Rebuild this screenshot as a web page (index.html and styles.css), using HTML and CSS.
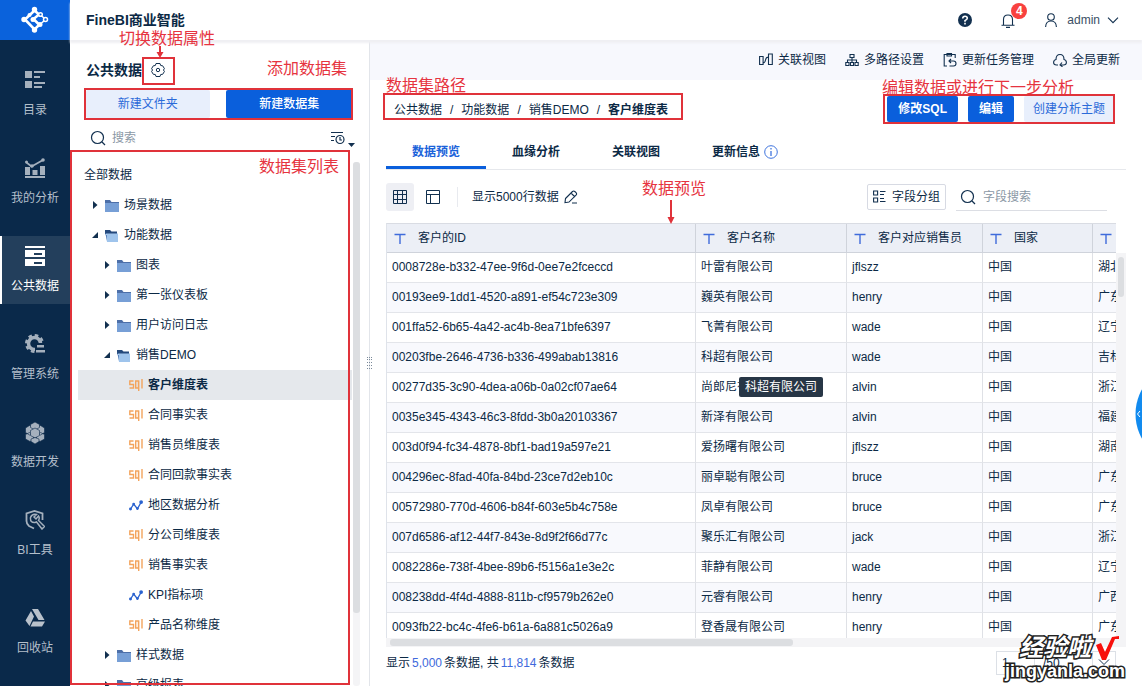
FILE: index.html
```html
<!DOCTYPE html>
<html lang="zh-CN">
<head>
<meta charset="utf-8">
<title>FineBI商业智能</title>
<link rel="stylesheet" href="styles.css">
</head>
<body>
<svg class="sprite" aria-hidden="true">
  <symbol id="folder" viewBox="0 0 14 13"><path d="M0 1h5l1.500 2H14v10H0z" fill="#4d6fa8"/><path d="M0 4h14v9H0z" fill="#779fd6"/></symbol>
  <symbol id="folder-open" viewBox="0 0 14 13"><path d="M0 1h5l1.500 1.500H12V5H0z" fill="#24497c"/><path d="M1 4.500h12V13H2z" fill="#9fc4ec"/><path d="M0 3v3h2v6z" fill="#5b83bb"/></symbol>
  <symbol id="sql" viewBox="0 0 14 13"><path d="M4.500 2H.800v3.500h3.700V9H.500M9.500 2H6.700v7h2.800zM9.700 1.500V12M13 0v9.500" fill="none" stroke="#f3a45c" stroke-width="1.400"/></symbol>
  <symbol id="trend" viewBox="0 0 15 12"><path d="M1.500 10 5 4.500l4 5L13 2.500" fill="none" stroke="#2a62cf" stroke-width="1.400"/><g fill="#2a62cf"><circle cx="1.600" cy="9.800" r="1.600"/><circle cx="5" cy="4.500" r="1.500"/><circle cx="9" cy="9.300" r="1.500"/><circle cx="13" cy="2.300" r="2"/></g></symbol>
  <symbol id="shut" viewBox="0 0 6 8"><path d="M1 0v8l4.500-4z" fill="#12304f"/></symbol>
  <symbol id="open" viewBox="0 0 6 8"><path d="M6 1v6H0z" fill="#12304f"/></symbol>
  <symbol id="search" viewBox="0 0 16 16"><circle cx="7.500" cy="7.500" r="6" fill="none" stroke="#12304f" stroke-width="1.200"/><path d="m12 12 3 3" stroke="#12304f" stroke-width="1.300"/></symbol>
  <symbol id="type" viewBox="0 0 12 12"><path d="M.500 1.500h11M6 1.500V11" stroke="#3f6bdb" stroke-width="1.400" fill="none"/></symbol>
</svg>

<div class="app">
  <nav class="nav">
    <a class="logo" href="#" aria-label="FineBI">
      <svg width="30" height="30" viewBox="0 0 30 30" fill="none" stroke="#fff" stroke-width="2.600"><path d="M14.500 5.500 5 14.500l9.500 10 5-5M14.500 5.500l4.500 4-5.500 4.500 5 5"/><path d="M20 9.500l4 3.500M21 18.500l3.500-3" stroke-width="1.600"/><g fill="#fff" stroke="none"><circle cx="14.500" cy="4.500" r="2.700"/><circle cx="4" cy="14.500" r="2.700"/><circle cx="14.500" cy="25" r="2.700"/><circle cx="20" cy="19.500" r="2.500"/><circle cx="13" cy="14.500" r="2.500"/><circle cx="9.500" cy="10" r="2"/></g><circle cx="20.500" cy="9.500" r="1.800" fill="#0a62dc" stroke-width="1.500"/><circle cx="25.500" cy="14.500" r="2" fill="#0a62dc" stroke-width="1.500"/></svg>
    </a>
    <div class="nav-list">
      <a class="nav-item" href="#"><svg width="20" height="20" viewBox="0 0 20 20" fill="#a5b0bd"><path d="M0 1h7v7H0zM9 1h11v2H9zM9 6h6v2H9zM0 11h7v7H0zM9 12h11v2H9zM9 16h8v2H9z"/></svg><span>目录</span></a>
      <a class="nav-item" href="#"><svg width="20" height="20" viewBox="0 0 20 20" fill="#a5b0bd"><path d="M0 9h5v8H0zM7.500 12h5v5h-5zM15 8h5v9h-5zM0 18h20v2H0z"/><path d="m1.500 4.500 5 4L11 6l7-4" fill="none" stroke="#a5b0bd" stroke-width="1.800"/><circle cx="1.500" cy="4" r="1.500"/><circle cx="7" cy="8" r="1.800"/><circle cx="18" cy="2" r="1.800"/></svg><span>我的分析</span></a>
      <a class="nav-item active" href="#"><svg width="20" height="20" viewBox="0 0 20 20"><path d="M0 0h20v2H0zM0 4h20v7H0zM0 13h20v7H0z" fill="#fff"/><path d="M9 7h8v2H9zM9 16h8v2H9z" fill="#233f5c"/></svg><span>公共数据</span></a>
      <a class="nav-item" href="#"><svg width="20" height="20" viewBox="0 0 20 20"><circle cx="9.500" cy="9.500" r="6" fill="none" stroke="#a5b0bd" stroke-width="3.500"/><circle cx="9.500" cy="9.500" r="8.300" fill="none" stroke="#a5b0bd" stroke-width="2.400" stroke-dasharray="3.600 2.920"/><path d="M10 9h10v11H10z" fill="#0a294a"/><path d="M12 11h7v2.500h-7zM11 16h9v2.500h-9z" fill="#a5b0bd"/></svg><span>管理系统</span></a>
      <a class="nav-item" href="#"><svg width="20" height="22" viewBox="0 0 20 22" fill="#a5b0bd" stroke="#0a294a" stroke-width=".6"><path d="m4.500 3.500 4 2.500v4.500l-4 2.500-4-2.500V6zM15.500 3.500l4 2.500v4.500l-4 2.500-4-2.500V6zM4.500 10.500l4 2.500v4.500L5 19.500.500 17v-4.500zM15.500 10.500l4 2V17L15 19.500l-3.500-2V13z"/><path d="m10 0 4.500 2.500v3L10 8 5.500 5.500v-3z"/><path d="m10 6 4.500 2.500v5L10 16l-4.500-2.500v-5z"/><path d="m10 15.500 4 1.500v2.500L10 22l-4-2.500V17z"/></svg><span>数据开发</span></a>
      <a class="nav-item" href="#"><svg width="20" height="20" viewBox="0 0 20 20" fill="none" stroke="#a5b0bd" stroke-width="1.800"><path d="M9 18.500 4 16q-2.500-2-2.500-5V3.500L9.500 1l8 2.500V10"/><path d="m9 7 2.500-2.500Q7 3.500 5.500 7.500 5 13 10 12.500l1.500-.5 5.500 7 2.500-2.500-6-6q1.500-2.500 0-4.500L11 9z" stroke-width="1.500"/></svg><span>BI工具</span></a>
      <a class="nav-item last" href="#"><svg width="20" height="20" viewBox="0 0 20 20" fill="#b9c1cb"><path d="M7 1h6l6.500 11h-6zM6 3l3 5.500L4.500 18l-4-5.500zM8 13.500h12L17 18.500H5.500z"/></svg><span>回收站</span></a>
    </div>
  </nav>

  <div class="page">
    <header class="header">
      <h1 class="brand">FineBI商业智能</h1>
      <div class="user-bar">
        <button class="icon-btn" aria-label="帮助"><svg width="14" height="14" viewBox="0 0 14 14"><circle cx="7" cy="7" r="7" fill="#12304f"/><path d="M4.700 5.500Q4.800 3.200 7 3.200t2.300 2Q9.300 6.400 7 7.600v1.200M7 9.800v1.600" fill="none" stroke="#fff" stroke-width="1.600"/></svg></button>
        <button class="icon-btn bell" aria-label="消息"><svg width="14" height="15" viewBox="0 0 14 15" fill="none" stroke="#12304f" stroke-width="1.100"><path d="M2.500 12V6.500Q2.500 2 7 2t4.500 4.500V12M.500 12.300h13M5 14.400h4"/></svg><span class="badge">4</span></button>
        <button class="account"><svg class="person" width="12" height="14" viewBox="0 0 12 14" fill="none" stroke="#12304f" stroke-width="1.100"><circle cx="6" cy="4" r="3.300"/><path d="M.600 14Q.800 8 6 8t5.400 6"/></svg><span>admin</span><svg width="12" height="7" viewBox="0 0 12 7" fill="none" stroke="#12304f" stroke-width="1.100"><path d="m1 .700 5 5 5-5"/></svg></button>
      </div>
    </header>

    <div class="body">
      <aside class="panel">
        <div class="panel-title"><h2>公共数据</h2>
          <button class="icon-btn gear" aria-label="数据属性"><svg width="14" height="14" viewBox="0 0 14 14" fill="none" stroke="#12304f"><path d="M5 .500h4l.700 2 2 .300 1.800 3L12.300 7l1.200 1.300-1.800 3-2 .200-.7 2H5l-.700-2-2-.200-1.800-3L1.700 7 .500 5.800l1.800-3 2-.300z"/><circle cx="7" cy="7" r="1.700"/></svg></button>
        </div>
        <div class="panel-actions">
          <button class="btn soft">新建文件夹</button><button class="btn primary">新建数据集</button>
        </div>
        <div class="panel-search">
          <svg width="16" height="16"><use href="#search"/></svg>
          <input type="text" placeholder="搜索" aria-label="搜索">
          <button class="sort" aria-label="排序"><svg width="24" height="18" viewBox="0 0 24 18" fill="none" stroke="#12304f" stroke-width="1.200"><path d="M0 3.500h12M0 7.500h4M0 11.500h3"/><circle cx="9" cy="10.500" r="4"/><path d="M9 8v3h2"/><path d="M17 14h7l-3.500 4z" fill="#12304f" stroke="none"/></svg></button>
        </div>
        <div class="tree-area">
          <ul class="tree">
            <li class="l0">全部数据</li>
            <li class="l1"><svg class="arrow"><use href="#shut"/></svg><svg class="ico"><use href="#folder"/></svg>场景数据</li>
            <li class="l1"><svg class="arrow"><use href="#open"/></svg><svg class="ico"><use href="#folder-open"/></svg>功能数据</li>
            <li class="l2"><svg class="arrow"><use href="#shut"/></svg><svg class="ico"><use href="#folder"/></svg>图表</li>
            <li class="l2"><svg class="arrow"><use href="#shut"/></svg><svg class="ico"><use href="#folder"/></svg>第一张仪表板</li>
            <li class="l2"><svg class="arrow"><use href="#shut"/></svg><svg class="ico"><use href="#folder"/></svg>用户访问日志</li>
            <li class="l2"><svg class="arrow"><use href="#open"/></svg><svg class="ico"><use href="#folder-open"/></svg>销售DEMO</li>
            <li class="l3 selected"><svg class="ico"><use href="#sql"/></svg>客户维度表</li>
            <li class="l3"><svg class="ico"><use href="#sql"/></svg>合同事实表</li>
            <li class="l3"><svg class="ico"><use href="#sql"/></svg>销售员维度表</li>
            <li class="l3"><svg class="ico"><use href="#sql"/></svg>合同回款事实表</li>
            <li class="l3"><svg class="ico"><use href="#trend"/></svg>地区数据分析</li>
            <li class="l3"><svg class="ico"><use href="#sql"/></svg>分公司维度表</li>
            <li class="l3"><svg class="ico"><use href="#sql"/></svg>销售事实表</li>
            <li class="l3"><svg class="ico"><use href="#trend"/></svg>KPI指标项</li>
            <li class="l3"><svg class="ico"><use href="#sql"/></svg>产品名称维度</li>
            <li class="l2"><svg class="arrow"><use href="#shut"/></svg><svg class="ico"><use href="#folder"/></svg>样式数据</li>
            <li class="l2"><svg class="arrow"><use href="#shut"/></svg><svg class="ico"><use href="#folder"/></svg>高级报表</li>
          </ul>
          <div class="tree-track"><div class="tree-thumb"></div></div>
        </div>
        <svg class="grip" width="5" height="12" viewBox="0 0 5 12" fill="#7b8a9a"><path d="M0 0h1v1H0zM2 0h1v1H2zM4 0h1v1H4zM0 2h1v1H0zM2 2h1v1H2zM4 2h1v1H4zM0 5h1v1H0zM2 5h1v1H2zM4 5h1v1H4zM0 8h1v1H0zM2 8h1v1H2zM4 8h1v1H4zM0 11h1v1H0zM2 11h1v1H2zM4 11h1v1H4z"/></svg>
      </aside>

      <main class="main">
        <div class="tools">
          <button><svg width="14" height="14" viewBox="0 0 14 14" fill="none" stroke="#12304f" stroke-width="1.100"><path d="M.600 3.500h3.500v8H.600zM9.500 1h3.800v10.500H9.500zM4 10q2 0 2.500-3T9.500 4"/></svg>关联视图</button>
          <button><svg width="14" height="14" viewBox="0 0 14 14" fill="none" stroke="#12304f" stroke-width="1.100"><path d="M5 1.500h4v3H5zM.800 9.500H4v3H.800zM5.500 9.500h3v3h-3zM10 9.500h3.200v3H10zM7 4.500v5M2.500 9.500V7h9v2.500"/></svg>多路径设置</button>
          <button><svg width="14" height="14" viewBox="0 0 14 14" fill="none" stroke="#12304f" stroke-width="1.100"><path d="M4 13H1.200V1.500h11V5M4 .500h4.500V3H4zM6 8h4.500q2.500 0 2.500 2.500T10.500 13H6.500M8 6 6 8l2 2"/></svg>更新任务管理</button>
          <button><svg width="14" height="14" viewBox="0 0 14 14" fill="none" stroke="#12304f" stroke-width="1.100"><path d="M5 12H3.500Q.600 12 .600 9.500T3 6.500Q3 1.500 7 1.500t4 5q2.400.500 2.400 3T10.500 12H8M9 9.500 7 12l2.500 1.800"/></svg>全局更新</button>
        </div>

        <div class="content">
          <div class="title-row">
            <div class="crumbs"><span>公共数据</span><i>/</i><span>功能数据</span><i>/</i><span>销售DEMO</span><i>/</i><strong>客户维度表</strong></div>
            <div class="edit-actions"><button class="btn primary">修改SQL</button><button class="btn primary">编辑</button><button class="btn soft">创建分析主题</button></div>
          </div>

          <div class="tabs">
            <button class="tab current">数据预览</button><button class="tab">血缘分析</button><button class="tab">关联视图</button>
            <button class="tab info">更新信息<svg width="14" height="14" viewBox="0 0 14 14" fill="none" stroke="#3f74dd"><circle cx="7" cy="7" r="6.300"/><path d="M7 6v5M7 3v1.600" stroke-width="1.300"/></svg></button>
          </div>

          <div class="filter">
            <button class="view on" aria-label="表格视图"><svg width="14" height="14" viewBox="0 0 14 14" fill="none" stroke="#12304f"><path d="M.500.500h13v13H.500zM.500 4.500h13M.500 9.500h13M4.500.500v13M9.500.500v13"/></svg></button>
            <button class="view" aria-label="结构视图"><svg width="14" height="14" viewBox="0 0 14 14" fill="none" stroke="#12304f"><path d="M.500.500h13v13H.500zM.500 4.500h13M4.500 4.500v9"/></svg></button>
            <span class="sep"></span>
            <span class="limit">显示5000行数据</span>
            <button class="icon-btn" aria-label="修改行数"><svg width="14" height="14" viewBox="0 0 14 14" fill="none" stroke="#12304f" stroke-width="1.100"><path d="m1.500 8.500 7-7q1.200-1 2.300 0l1.200 1.200q1.200 1.200 0 2.400l-7 7-4 .600zM7 3l4 4M8 13h5"/></svg></button>
            <button class="group"><svg width="13" height="13" viewBox="0 0 13 13" fill="none" stroke="#12304f" stroke-width="1.100"><path d="M.600 1h4v4h-4zM.600 8h4v4h-4zM7 1.500h5.500M7 4.500h4M7 8.500h4M7 11.500h5.500"/></svg>字段分组</button>
            <label class="field-search"><svg width="16" height="16"><use href="#search"/></svg><input type="text" placeholder="字段搜索" aria-label="字段搜索"></label>
          </div>

          <div class="grid">
            <div class="viewport">
              <table>
                <colgroup><col class="c-id"><col class="c-name"><col class="c-sales"><col class="c-country"><col class="c-prov"></colgroup>
                <thead><tr>
                  <th><svg><use href="#type"/></svg>客户的ID</th><th><svg><use href="#type"/></svg>客户名称</th><th><svg><use href="#type"/></svg>客户对应销售员</th><th><svg><use href="#type"/></svg>国家</th><th><svg><use href="#type"/></svg></th>
                </tr></thead>
                <tbody>
                  <tr><td>0008728e-b332-47ee-9f6d-0ee7e2fceccd</td><td>叶雷有限公司</td><td>jflszz</td><td>中国</td><td>湖北</td></tr>
                  <tr><td>00193ee9-1dd1-4520-a891-ef54c723e309</td><td>巍英有限公司</td><td>henry</td><td>中国</td><td>广东</td></tr>
                  <tr><td>001ffa52-6b65-4a42-ac4b-8ea71bfe6397</td><td>飞菁有限公司</td><td>wade</td><td>中国</td><td>辽宁</td></tr>
                  <tr><td>00203fbe-2646-4736-b336-499abab13816</td><td>科超有限公司</td><td>wade</td><td>中国</td><td>吉林</td></tr>
                  <tr><td>00277d35-3c90-4dea-a06b-0a02cf07ae64</td><td class="hovered">尚郎尼有限公司<span class="tip">科超有限公司</span></td><td>alvin</td><td>中国</td><td>浙江</td></tr>
                  <tr><td>0035e345-4343-46c3-8fdd-3b0a20103367</td><td>新泽有限公司</td><td>alvin</td><td>中国</td><td>福建</td></tr>
                  <tr><td>003d0f94-fc34-4878-8bf1-bad19a597e21</td><td>爱扬曙有限公司</td><td>jflszz</td><td>中国</td><td>湖南</td></tr>
                  <tr><td>004296ec-8fad-40fa-84bd-23ce7d2eb10c</td><td>丽卓聪有限公司</td><td>bruce</td><td>中国</td><td>广东</td></tr>
                  <tr><td>00572980-770d-4606-b84f-603e5b4c758e</td><td>凤卓有限公司</td><td>bruce</td><td>中国</td><td>广东</td></tr>
                  <tr><td>007d6586-af12-44f7-843e-8d9f2f66d77c</td><td>聚乐汇有限公司</td><td>jack</td><td>中国</td><td>浙江</td></tr>
                  <tr><td>0082286e-738f-4bee-89b6-f5156a1e3e2c</td><td>菲静有限公司</td><td>wade</td><td>中国</td><td>辽宁</td></tr>
                  <tr><td>008238dd-4f4d-4888-811b-cf9579b262e0</td><td>元睿有限公司</td><td>henry</td><td>中国</td><td>广西</td></tr>
                  <tr><td>0093fb22-bc4c-4fe6-b61a-6a881c5026a9</td><td>登香晟有限公司</td><td>henry</td><td>中国</td><td>广东</td></tr>
                </tbody>
              </table>
            </div>
            <div class="v-track"><div class="v-thumb"></div></div>
            <div class="h-track"><div class="h-thumb"></div></div>
          </div>

          <footer class="foot">
            <p>显示<b>5,000</b>条数据, 共<b>11,814</b>条数据</p>
            <div class="pager"><input type="text" value="1" aria-label="页码"><span>/50</span><button aria-label="下一页"><svg width="12" height="7" viewBox="0 0 12 7" fill="none" stroke="#12304f"><path d="m1 .500 5 5 5-5"/></svg></button></div>
          </footer>
        </div>
      </main>
    </div>
  </div>

  <div class="notes">
    <span class="note n-prop">切换数据属性</span><span class="note n-add">添加数据集</span><span class="note n-list">数据集列表</span><span class="note n-path">数据集路径</span><span class="note n-edit">编辑数据或进行下一步分析</span><span class="note n-preview">数据预览</span>
    <span class="box b-prop"></span><span class="box b-add"></span><span class="box b-list"></span><span class="box b-path"></span><span class="box b-edit"></span>
    <svg class="a-prop" width="8" height="12" viewBox="0 0 8 12"><path d="M3 0h2v6h2.500L4 12 .500 6H3z" fill="#e0323a"/></svg>
    <svg class="a-preview" width="8" height="24" viewBox="0 0 8 24"><path d="M3 0h2v17h2.500L4 24 .500 17H3z" fill="#e0323a"/></svg>
  </div>
  <svg class="side-handle" width="7" height="50" viewBox="0 0 7 50"><circle cx="51" cy="25" r="50.500" fill="#128bef"/><path d="m5 22-2.500 3L5 28" fill="none" stroke="#fff"/></svg>
  <div class="watermark"><span class="wm-name">经验啦</span><svg width="24" height="25" viewBox="0 0 24 25"><path d="M0 9l5-2 4 9L16 1l7-1v3h-4L10 24H6z" fill="#f8100c"/></svg><span class="wm-site">jingyanla.com</span></div>
</div>
</body>
</html>
```
FILE: styles.css
```css
* { box-sizing: border-box; }
body {
  margin: 0;
  font: 12px/16px "Liberation Sans", "Noto Sans CJK SC", sans-serif;
  color: #0b2945;
  background: #fff;
}
h1, h2, p, ul { margin: 0; padding: 0; }
button, input { font: inherit; color: inherit; border: 0; background: none; padding: 0; }
button { display: flex; align-items: center; justify-content: center; white-space: nowrap; }
input { min-width: 0; outline: 0; }
input::placeholder { color: #8b98a5; opacity: 1; }
svg { flex: none; display: block; }
.sprite { position: absolute; width: 0; height: 0; }

.app { position: relative; display: flex; height: 100vh; overflow: hidden; }

.nav { width: 70px; flex: none; display: flex; flex-direction: column; background: #0a294a; }
.logo { height: 40px; display: flex; align-items: center; justify-content: center; background: #0a62dc; }
.nav-list { flex: 1; display: flex; flex-direction: column; gap: 20px; padding: 20px 0; }
.nav-item {
  height: 68px; display: flex; flex-direction: column; align-items: center; justify-content: space-between;
  padding: 10px 0; color: #b4bfcb; text-decoration: none;
}
.nav-item.active { color: #fff; background: #233f5c; border-left: 2px solid #fff; padding-right: 2px; }
.nav-item.last { margin-top: auto; }

.page { flex: 1; min-width: 0; display: flex; flex-direction: column; }
.header {
  position: relative; z-index: 1; height: 40px; flex: none; display: flex; align-items: center; justify-content: space-between;
  padding: 0 23px 0 16px; background: #fff; box-shadow: 0 3px 2px #efeff3;
}
.brand { font-size: 14px; line-height: 20px; }
.user-bar { display: flex; align-items: center; color: #3b4f64; }
.bell { position: relative; margin: 0 30px 0 29px; }
.badge {
  position: absolute; left: 10px; top: -10px; width: 16px; height: 16px; border-radius: 8px;
  background: #f8413f; color: #fff; font-weight: 700; text-align: center;
}
.account { gap: 7px; }
.person { margin-right: 3px; }

.body { flex: 1; min-height: 0; display: flex; }
.panel { position: relative; width: 300px; flex: none; display: flex; flex-direction: column; border-right: 1px solid #e2e5ea; padding-top: 20px; }
.panel-title { display: flex; align-items: center; gap: 9px; height: 20px; padding-left: 16px; }
.panel-title h2 { font-size: 14px; line-height: 20px; }
.panel-actions { display: flex; gap: 16px; padding: 10px 16px 0; }
.panel-actions .btn { flex: 1; height: 28px; }
.btn { height: 26px; border-radius: 2px; }
.primary { padding: 0 11px; background: #0a5fdc; color: #fff; font-weight: 700; }
.panel-actions .primary { font-weight: 500; }
.soft { padding: 0 9px; background: #e8effc; color: #2b6ad9; }
.panel-search { display: flex; align-items: center; gap: 6px; height: 40px; padding: 0 14px 0 20px; }
.panel-search input { flex: 1; }
.tree-area { flex: 1; min-height: 0; display: flex; padding-left: 8px; margin-top: 2px; }
.tree { flex: 1; overflow: hidden; list-style: none; }
.tree li { display: flex; align-items: center; height: 30px; }
.tree .l0 { padding-left: 6px; }
.tree .l1 { padding-left: 14px; }
.tree .l2 { padding-left: 26px; }
.tree .l3 { padding-left: 51px; }
.arrow { width: 6px; height: 8px; margin-right: 7px; }
.ico { width: 14px; height: 13px; margin-right: 5px; }
.tree .selected { background: #e5e8ec; font-weight: 700; }
.tree-track { width: 7px; margin: 2px 9px 0 1px; background: #f4f4f6; border-radius: 3px; }
.tree-thumb { height: 86%; background: #dcdee1; border-radius: 3px; }
.grip { position: absolute; right: -3px; top: 49%; }

.main { flex: 1; min-width: 0; display: flex; flex-direction: column; }
.tools { height: 40px; flex: none; display: flex; justify-content: flex-end; gap: 19px; padding: 0 22px; background: #f7f8fd; }
.tools button { gap: 5px; }
.content { flex: 1; min-height: 0; display: flex; flex-direction: column; padding: 16px 16px 0; }
.title-row { display: flex; justify-content: space-between; padding: 0 12px 0 8px; }
.crumbs { display: flex; align-items: center; gap: 8px; padding-top: 2px; }
.crumbs i { font-style: normal; }
.edit-actions { display: flex; gap: 10px; }
.tabs { display: flex; height: 48px; flex: none; border-bottom: 1px solid #e6e8ec; }
.tab { width: 100px; font-weight: 700; padding-top: 16px; border-bottom: 3px solid transparent; gap: 4px; }
.tab.info { width: 118px; }
.tab.current { color: #1b63da; border-color: #0a5fdc; }
.filter { display: flex; align-items: center; height: 53px; flex: none; padding-right: 19px; }
.view { width: 28px; height: 28px; border-radius: 3px; margin-right: 5px; }
.view.on { background: #eeeff4; }
.sep { width: 1px; height: 20px; margin: 0 14px 0 5px; background: #e8eaef; }
.limit { margin-right: 5px; }
.group { height: 26px; gap: 6px; padding: 0 5px; margin-left: auto; border: 1px solid #d7dae3; border-radius: 2px; }
.field-search { display: flex; align-items: center; gap: 7px; width: 151px; height: 29px; margin-left: 10px; padding: 2px 0 0 4px; border-bottom: 1px solid #dcdee4; }
.field-search input { width: 100px; }

.grid { flex: 1; min-height: 0; display: grid; grid-template: minmax(0, 1fr) 9px / minmax(0, 1fr) 10px; background: #f4f4f6; }
.viewport { overflow: hidden; background: #fff; }
table { table-layout: fixed; width: 860px; border-collapse: separate; border-spacing: 0; border-left: 1px solid #dfe3ea; border-top: 1px solid #d9dce3; }
.c-id { width: 309px; }
.c-name { width: 151px; }
.c-sales { width: 136px; }
.c-country { width: 110px; }
th, td { height: 30px; padding: 0 5px; text-align: left; white-space: nowrap; border-right: 1px solid #dfe1e6; border-bottom: 1px solid #e3e5ea; }
td { padding-bottom: 2px; }
tbody tr:nth-child(even) td { background: #f8f9fd; }
th { height: 29px; font-weight: 400; background: #eceff6; border-color: #cfd3db; }
th svg { display: inline-block; vertical-align: middle; width: 12px; height: 12px; margin: 0 12px 0 2px; }
.hovered { position: relative; }
.tip { position: absolute; left: 43px; top: 4px; padding: 2px 6px; border-radius: 2px; background: #273646; color: #fff; }
.v-track { padding: 34px 2px 0; background: linear-gradient(#fff 30px, transparent 30px); }
.v-thumb { height: 40px; background: #dcdee1; border-radius: 3px; }
.h-track { grid-column: 1 / -1; padding: 1px 4px; }
.h-thumb { width: 55%; height: 7px; background: #dcdee1; border-radius: 3px; }
.foot { flex: none; height: 39px; display: flex; align-items: center; justify-content: space-between; padding: 0 10px 8px 0; }
.foot b { margin: 0 2px; font-weight: 400; color: #4069dc; }
.pager { display: flex; align-items: center; gap: 8px; }
.pager input { width: 39px; height: 24px; padding-left: 5px; border: 1px solid #dce0e6; }
.pager span { width: 41px; }
.pager button { width: 24px; height: 24px; border: 1px solid #dce0e6; }

.notes { position: absolute; inset: 0; z-index: 2; pointer-events: none; color: #e63440; font-size: 16px; line-height: 20px; }
.note, .box, .notes svg { position: absolute; white-space: nowrap; }
.box { border: 2px solid #e0323a; }
.n-prop { left: 119px; top: 29px; }
.n-add { left: 267px; top: 59px; }
.n-list { left: 259px; top: 157px; }
.n-path { left: 386px; top: 76px; }
.n-edit { right: 68px; top: 78px; }
.n-preview { left: 642px; top: 179px; }
.b-prop { left: 142px; top: 57px; width: 33px; height: 28px; }
.b-add { left: 84px; top: 88px; width: 269px; height: 32px; }
.b-list { left: 70px; top: 150px; width: 280px; bottom: 1px; }
.b-path { left: 383px; top: 93px; width: 300px; height: 27px; }
.b-edit { right: 27px; top: 94px; width: 232px; height: 30px; }
.a-prop { left: 156px; top: 46px; }
.a-preview { left: 667px; top: 200px; }
.side-handle { position: absolute; right: 0; top: 389px; }
.watermark {
  position: absolute; right: 17px; bottom: 5px; z-index: 3; display: grid; grid-template-columns: 1fr auto; column-gap: 5px;
  color: #fff; font-weight: 700; paint-order: stroke fill; -webkit-text-stroke: 3px #222;
}
.watermark svg { margin-right: 5px; }
.wm-name { font-size: 24px; line-height: 24px; font-style: italic; justify-self: end; }
.wm-site { grid-column: 1 / -1; font-size: 18px; line-height: 20px; }
```
